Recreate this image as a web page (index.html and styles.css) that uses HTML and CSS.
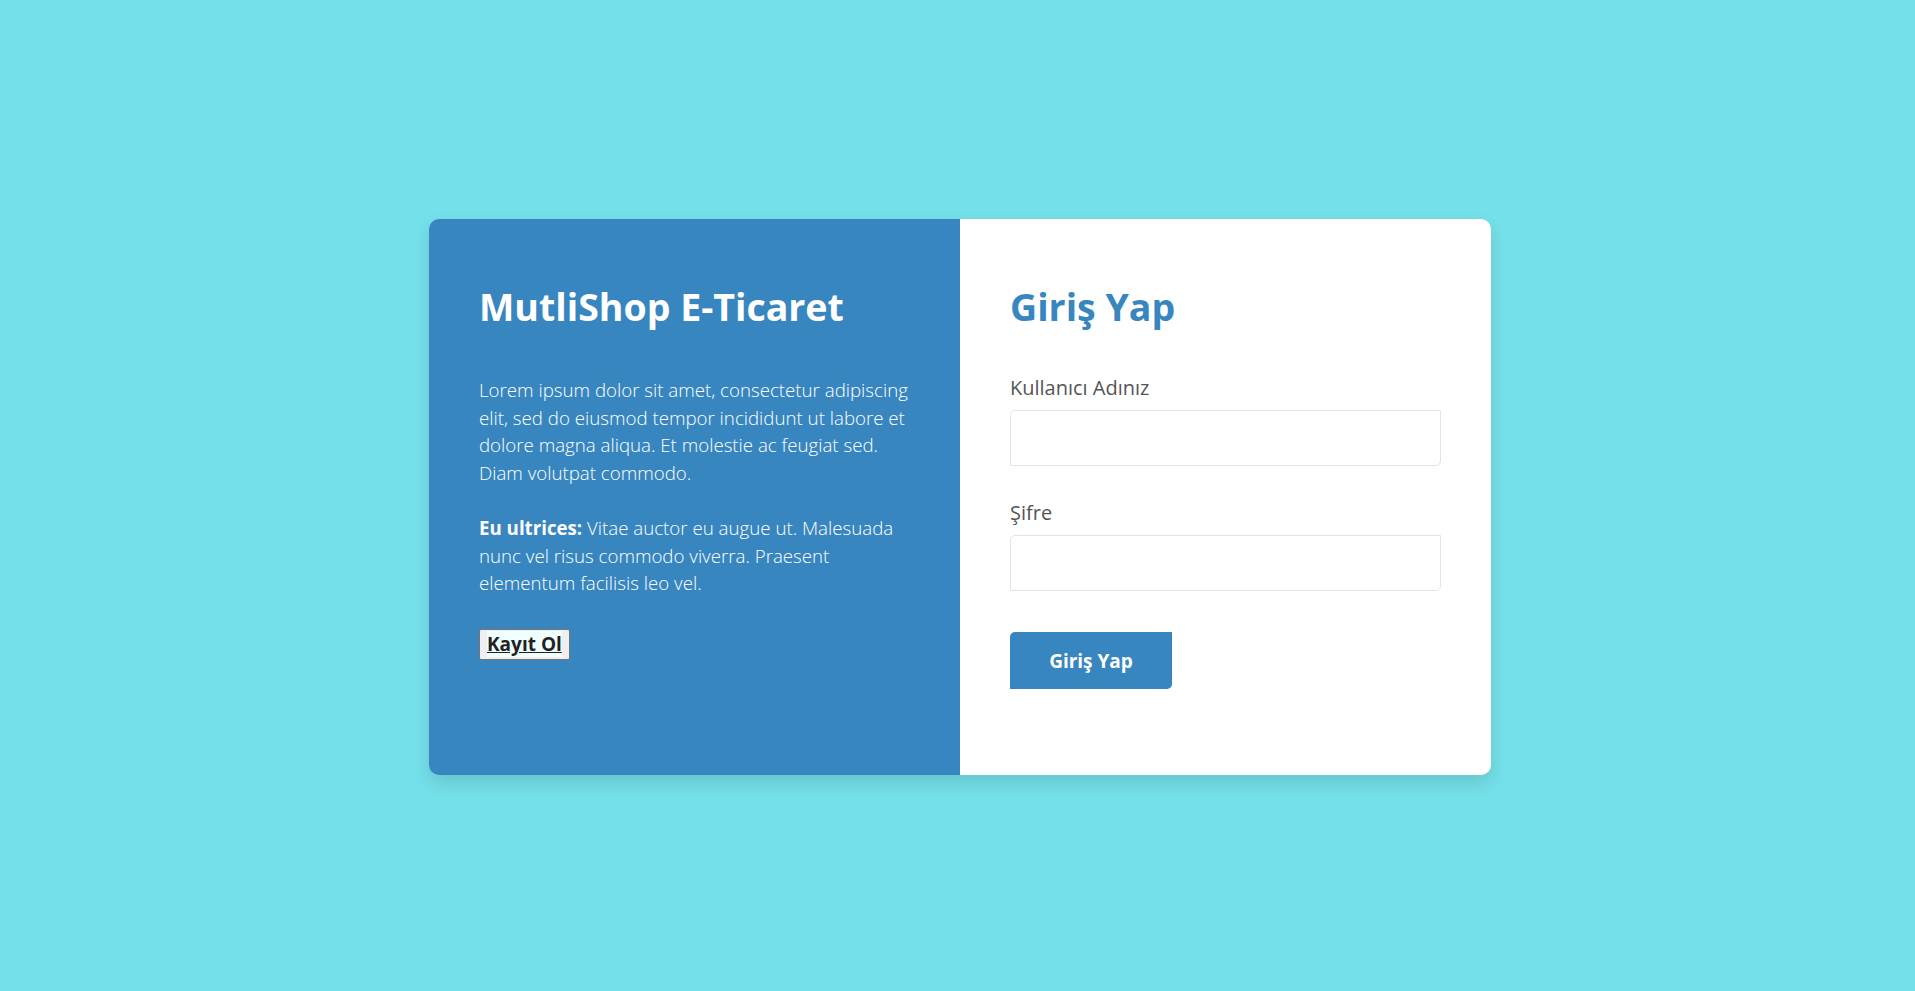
FILE: index.html
```html
<!DOCTYPE html>
<html lang="tr">
<head>
<meta charset="utf-8">
<title>MutliShop - Giriş Yap</title>
<link rel="stylesheet" href="styles.css">
</head>
<body>
<div class="page">
  <div class="card">
    <section class="info">
      <h1 class="info-title">MutliShop E-Ticaret</h1>
      <p class="info-text">Lorem ipsum dolor sit amet, consectetur adipiscing elit, sed do eiusmod tempor incididunt ut labore et dolore magna aliqua. Et molestie ac feugiat sed. Diam volutpat commodo.</p>
      <p class="info-text"><strong>Eu ultrices:</strong> Vitae auctor eu augue ut. Malesuada nunc vel risus commodo viverra. Praesent elementum facilisis leo vel.</p>
      <button class="register" type="button"><a class="register-link" href="#">Kayıt Ol</a></button>
    </section>
    <section class="login">
      <h2 class="login-title">Giriş Yap</h2>
      <form class="login-form">
        <label class="field-label" for="user">Kullanıcı Adınız</label>
        <input class="field-input" id="user" type="text">
        <label class="field-label" for="pass">Şifre</label>
        <input class="field-input" id="pass" type="password">
        <button class="submit" type="button">Giriş Yap</button>
      </form>
    </section>
  </div>
</div>
</body>
</html>
```

FILE: styles.css
```css
* { box-sizing: border-box; }

html, body {
  margin: 0;
  padding: 0;
  background: #74e0e9;
  font-family: "Open Sans", "Liberation Sans", sans-serif;
}

.page {
  display: flex;
  justify-content: center;
  padding: 219px 0 0 5px;
  min-height: 991px;
}

.card {
  display: flex;
  width: 1062px;
  border-radius: 10px;
  box-shadow: 0 8px 18px rgba(0, 0, 0, 0.12);
  overflow: hidden;
  align-self: flex-start;
}

.info {
  flex: 0 0 531px;
  background: #3886bf;
  color: #fff;
  padding: 63px 50px 40px 50px;
}

.info-title {
  margin: 0 0 45px 0;
  font-size: 37.5px;
  font-weight: 700;
  line-height: 49px;
}

.info-text {
  margin: 0 0 27px 0;
  font-size: 18.7px;
  font-weight: 300;
  line-height: 27.7px;
}

.info-text strong {
  font-weight: 700;
}

.register {
  margin-top: 5px;
  font-family: "Open Sans", "Liberation Sans", sans-serif;
  font-size: 19px;
  font-weight: 700;
  padding: 1px 7px;
  background: #efefef;
  border: 1px solid #767676;
  border-radius: 2px;
  line-height: 27px;
}

.register-link {
  color: #222;
  text-decoration: underline;
  background: #effefe;
}

.login {
  flex: 0 0 531px;
  background: #fff;
  padding: 63px 50px 86px 50px;
}

.login-title {
  margin: 0 0 45px 0;
  font-size: 37.5px;
  font-weight: 700;
  line-height: 49px;
  color: #3886bf;
}

.login-form {
  display: flex;
  flex-direction: column;
}

.field-label {
  font-size: 20px;
  font-weight: 400;
  color: #555;
  line-height: 24px;
  margin-bottom: 10px;
}

.field-input {
  height: 56px;
  width: 100%;
  border: 1px solid #e4e4e4;
  border-radius: 5px 0 5px 0;
  margin-bottom: 35px;
  font-size: 16px;
  padding: 0 12px;
  outline: none;
}

.submit {
  align-self: flex-start;
  margin-top: 6px;
  width: 162px;
  height: 57px;
  border: none;
  border-radius: 5px 0 5px 0;
  background: #3886bf;
  color: #fff;
  font-family: "Open Sans", "Liberation Sans", sans-serif;
  font-size: 19px;
  font-weight: 700;
}
```
